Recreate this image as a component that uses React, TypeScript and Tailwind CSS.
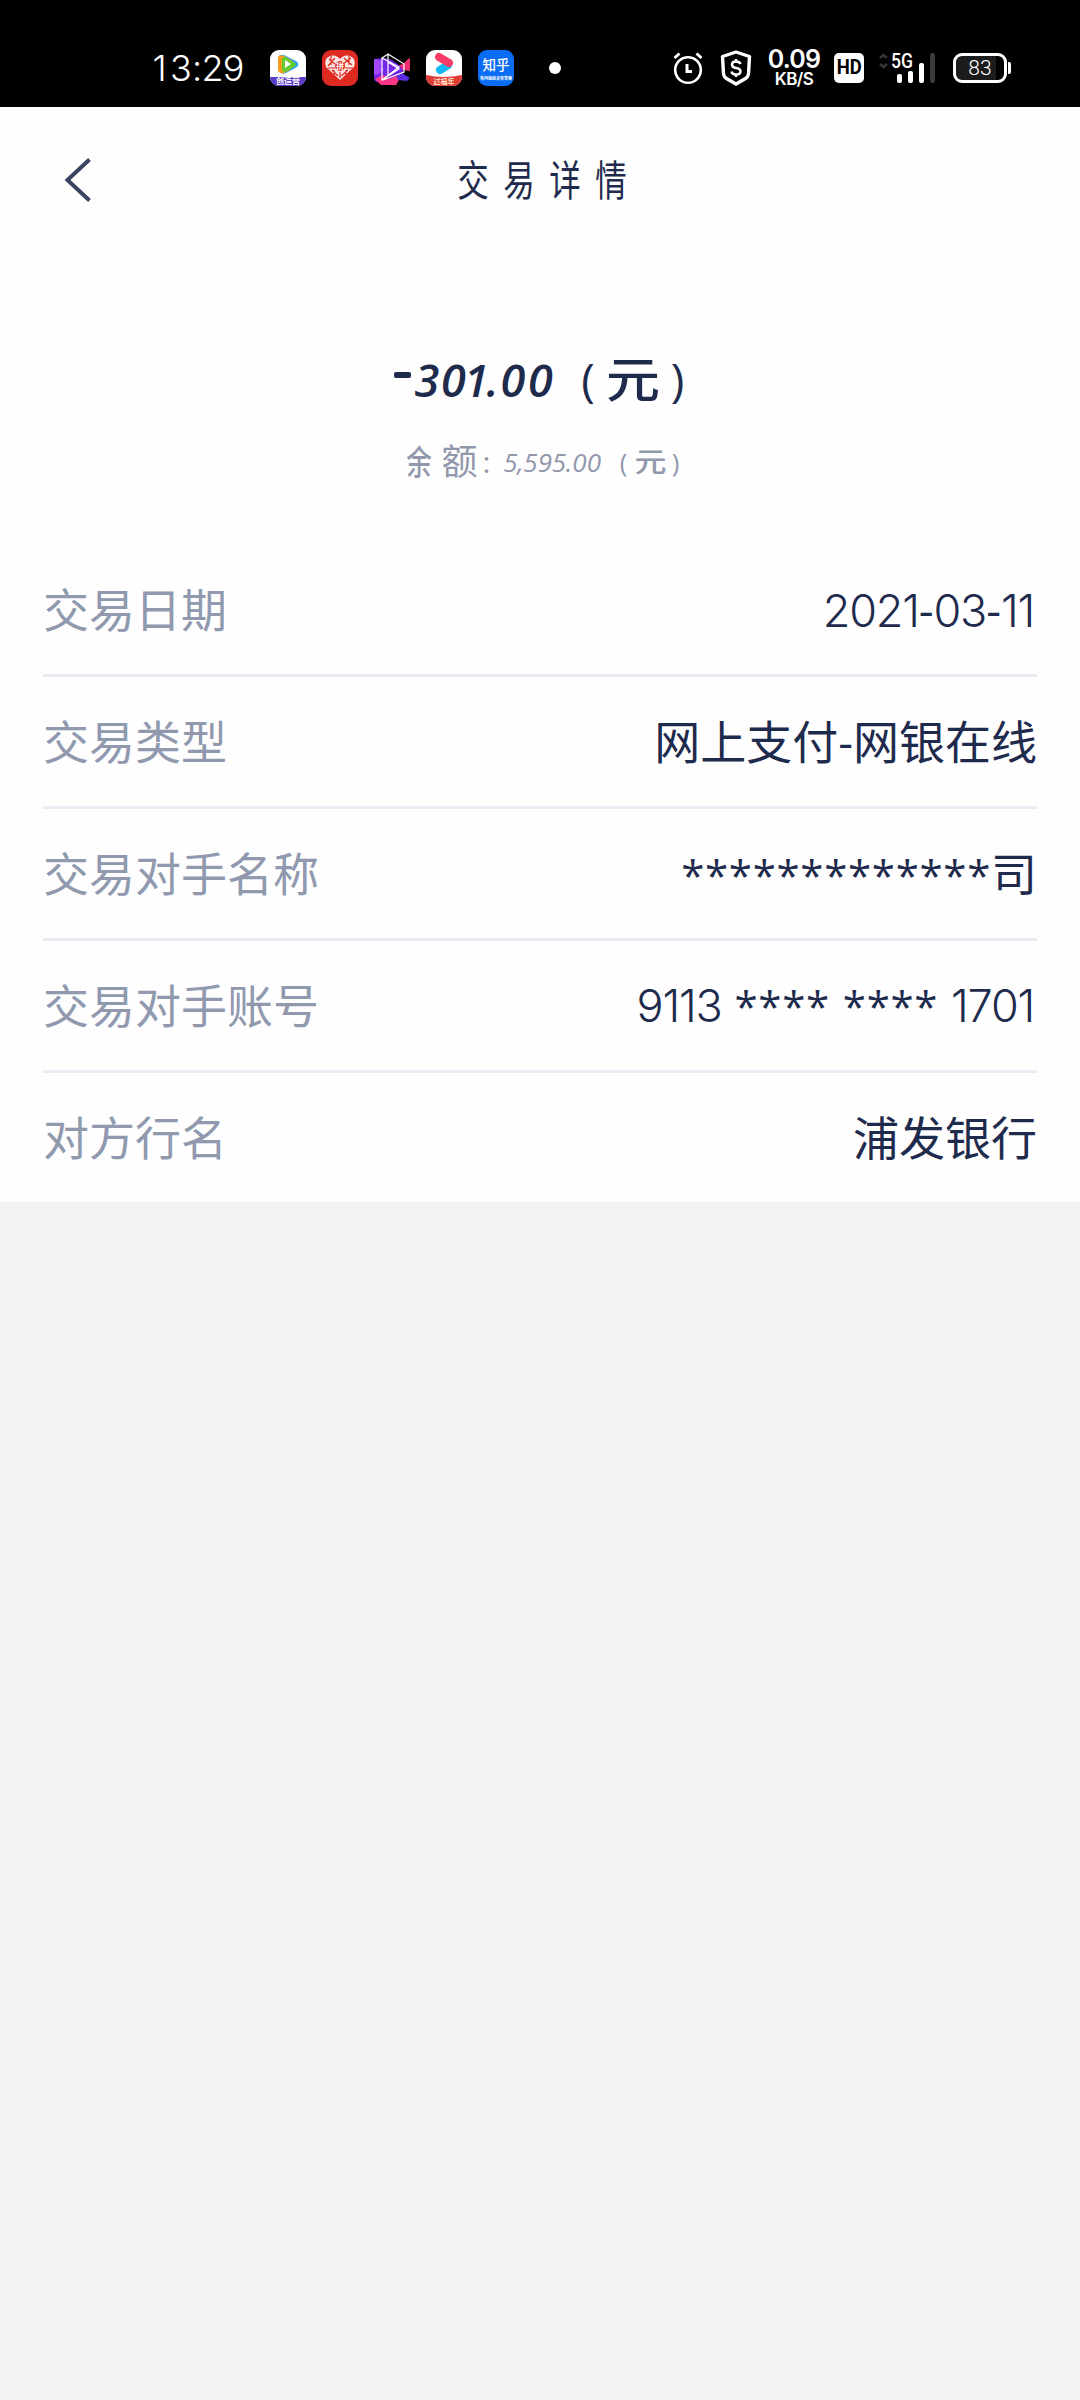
import type { ReactNode } from 'react';

type Glyph = [char: string, width: number];

const rows = [
  { label: '交易日期', value: '2021-03-11' },
  { label: '交易类型', value: '网上支付-网银在线' },
  { label: '交易对手名称', value: '*************司' },
  { label: '交易对手账号', value: '9113 **** **** 1701' },
  { label: '对方行名', value: '浦发银行' },
];

const amount: Glyph[] = [['3', 26], ['0', 27], ['1', 19], ['.', 13], ['0', 28], ['0', 27]];
const balance: Glyph[] = [['5', 14], [',', 6], ['5', 14], ['9', 15], ['5', 13], ['.', 7], ['0', 14], ['0', 15]];

// Each character sits centered in its own slot
function Spaced({ glyphs }: { glyphs: Glyph[] }) {
  return (
    <>
      {glyphs.map(([char, width], i) => (
        <span key={i} className="flex justify-center" style={{ width }}>{char}</span>
      ))}
    </>
  );
}

// Digits use Inter for its narrow proportional ones, everything else keeps the body font
function Value({ text }: { text: string }) {
  return (
    <span className="flex items-baseline whitespace-pre">
      {text.match(/[\d ]+|\*+|[^\d* ]+/g)?.map((part, i) => {
        if (/[\d ]/.test(part)) {
          return (
            <span key={i} className="font-[Inter] text-[45px] font-light tracking-[-1.2px] [word-spacing:1.5px] last:pr-[3px]">
              {part}
            </span>
          );
        }
        if (part[0] === '*') return <span key={i} className="text-[42px] tracking-[0.7px]">{part}</span>;
        return <span key={i}>{part}</span>;
      })}
    </span>
  );
}

function AppIcon({ children }: { children: ReactNode }) {
  return (
    <svg viewBox="0 0 36 36" className="size-9 rounded-[9px]">
      {children}
    </svg>
  );
}

function StatusBar() {
  return (
    <div className="flex h-[107px] items-center bg-black pt-[29px] pl-[150px] text-white">
      <div className="flex w-[120px] font-[Inter] text-[36px] leading-none font-[350]">
        <Spaced glyphs={[['1', 19], ['3', 24], [':', 8], ['2', 23], ['9', 19]]} />
      </div>

      <div className="flex gap-4">
        <AppIcon>
          <rect width="36" height="36" fill="#fff" />
          <path d="M9 6q1-2 5-1l12 6q4 3 1 6l-11 6q-5 2-7-2z" fill="#2ba4f0" />
          <path d="M8 7q2-3 6-1l9 5-3 9-6 3q-5 1-6-3z" fill="#ff9b1c" />
          <path d="M12 8q2-2 5 0l8 5q2 2-1 4l-9 5q-3 0-3-3z" fill="#64cf2c" />
          <path d="M15 10l6 4-6 4z" fill="#fff" />
          <rect y="27" width="36" height="9" fill="#593bc7" />
          <text x="18" y="34" textAnchor="middle" fontSize="8" fontWeight="700" fill="#fff">创造营</text>
        </AppIcon>
        <AppIcon>
          <rect width="36" height="36" fill="#df2a22" />
          <path d="M18 30L4 17q-3-8 4-11 6-2 10 3 4-5 10-3 7 3 4 11z" fill="#fbe3e0" />
          <path d="M7 9l6 5M13 8l-7 8M22 8l8 7M29 8l-8 6M6 18h7M23 18h8M10 20l6 6M26 20l-7 6M12 20v5M24 20v5M18 22v6M9 6v9M27 6v9" stroke="#df2a22" strokeWidth="1.2" fill="none" />
          <circle cx="18" cy="16" r="5" fill="#df2a22" />
          <text x="18" y="19" textAnchor="middle" fontSize="8" fontWeight="700" fill="#fff">拼</text>
        </AppIcon>
        <AppIcon>
          <path d="M0 9l10-1 8 2 12 9-4 9-4 2-8 3H7L0 31z" fill="#7426e8" />
          <path d="M0 9l9 2-3 5 4 4-5 4-5 1z" fill="#a348ff" />
          <path d="M25 15l4-1 6-6 1 1v12l-7-1z" fill="#f02c70" />
          <path d="M1 29l8-4 6 4 7-3 3 4-3 5H7z" fill="#ff3686" />
          <path d="M21 22l7 1 8 5-3 3-9-1z" fill="#5a2be0" />
          <path d="M8 8l6-4v22l-6 4zM8 8l17 9-17 13M14 4l16 10v8L9 30M14 12l11 7-11 7" fill="none" stroke="#fff" strokeWidth="1.2" />
        </AppIcon>
        <AppIcon>
          <rect width="36" height="36" fill="#fff" />
          <path d="M14 20l8-5" stroke="#12b7f5" strokeWidth="8" strokeLinecap="round" />
          <path d="M13 7l10 6" stroke="#fa3b67" strokeWidth="8" strokeLinecap="round" />
          <path d="M0 25q18 4 36 0v11H0z" fill="#df3a35" />
          <text x="18" y="34" textAnchor="middle" fontSize="7" fontWeight="700" fill="#ffe3c4">过福年</text>
        </AppIcon>
        <AppIcon>
          <rect width="36" height="36" fill="#0b6cf4" />
          <text x="18" y="20" textAnchor="middle" fontSize="13.5" fontWeight="500" fill="#fff">知乎</text>
          <text x="18" y="30" textAnchor="middle" fontSize="4" fontWeight="700" fill="#fff">有问题就会有答案</text>
        </AppIcon>
      </div>

      <div className="ml-[35px] size-3 rounded-full bg-white" />

      {/* Alarm */}
      <svg viewBox="0 0 30 34" className="ml-[112px] h-[34px] w-[30px]" fill="none" stroke="#fff" strokeWidth="2.6">
        <circle cx="15" cy="19" r="12.8" />
        <path d="M1.5 7l5-4.5M28.5 7l-5-4.5M14 13v7.5h5" strokeWidth="3" />
      </svg>

      {/* Shield */}
      <svg viewBox="0 0 32 36" className="ml-[17px] h-9 w-8" fill="none" stroke="#fff" strokeWidth="3.4" strokeLinejoin="round">
        <path d="M16 2L2.5 6.5 3.5 24q.5 3 3 4.5L16 34l9.5-5.500q2.500-1.500 3-4.500l1-17.500z" />
        <path d="M20.5 14q-1-2.500-4.500-2.500-4 0-4 3t4 3.500q4.500.5 4.500 3.500T16 24.500q-4 0-4.500-3M16 9v3M16 24v3" strokeWidth="2.5" />
      </svg>

      <div className="ml-[14px] flex w-[56px] flex-col items-center font-[Inter] font-semibold">
        <span className="text-[25px] leading-[20px] tracking-[-0.8px]">0.09</span>
        <span className="mt-[3px] text-[17px] leading-[15px] tracking-[-0.6px]">KB/S</span>
      </div>

      <div className="ml-[12px] flex h-[30px] w-[30px] items-center justify-center rounded-[5px] bg-white font-[Roboto] text-[21px] font-bold text-black">
        <span className="scale-x-[0.88]">HD</span>
      </div>

      {/* Signal */}
      <svg viewBox="0 0 58 32" className="ml-[14px] h-8 w-[58px]">
        <path d="M2 6l3.5-3L9 6M2 12l3.5 3L9 12" fill="none" stroke="#333" strokeWidth="2.8" />
        <text x="13" y="15.5" fontFamily="Roboto" fontSize="20" fontWeight="500" fill="#fff" textLength="22" lengthAdjust="spacingAndGlyphs">5G</text>
        <rect x="19" y="22" width="5" height="9" rx="2" fill="#fff" />
        <rect x="30" y="19" width="5" height="12" rx="2" fill="#fff" />
        <rect x="41" y="11" width="5" height="20" rx="2" fill="#fff" />
        <rect x="52" y="1" width="5" height="30" rx="2" fill="#3b3b3b" />
      </svg>

      {/* Battery */}
      <div className="ml-[17px] flex items-center gap-[1px]">
        <div className="flex h-[30px] w-[54px] items-center justify-center rounded-[9px] border-3 border-white bg-[linear-gradient(90deg,#1c1c1c_84%,#000_84%)] font-[Roboto] text-[21px] leading-none font-light">
          83
        </div>
        <div className="h-3 w-[3px] rounded-r-xs bg-white" />
      </div>
    </div>
  );
}

export default function App() {
  return (
    <div className="min-h-[2400px] w-[1080px] bg-[#f3f3f3] font-['Open_Sans','Noto_Sans_CJK_SC',sans-serif] text-[#1f2b4d]">
      <StatusBar />

      <main className="bg-[#fefefe]">
        {/* Header */}
        <header className="flex h-[145px] items-center pl-[60px]">
          <svg viewBox="0 0 32 46" className="h-[46px] w-8" fill="none" stroke="#3a4562" strokeWidth="4">
            <path d="M29.5 2.5L7.5 23l22 20.500" />
          </svg>
          <h1 className="ml-[358px] flex text-[42px]">
            {'交易详情'.split('').map((char) => (
              <span key={char} className="flex w-[46px] justify-center">
                <span className="scale-x-[0.75]">{char}</span>
              </span>
            ))}
          </h1>
        </header>

        {/* Amount */}
        <section className="flex h-[293px] flex-col items-center pt-[92px] pl-[5px]">
          <div className="flex h-[70px] items-center text-[46px] leading-none font-semibold">
            <span className="mr-[3px] mb-[8px] h-[6px] w-[17px] rounded-xs bg-[#1f2b4d]" />
            <span className="flex text-[45px] italic"><Spaced glyphs={amount} /></span>
            <span className="ml-[20px] flex items-center font-medium">
              <Spaced glyphs={[['(', 28]]} />
              <span className="flex w-[62px] justify-center text-[54px]"><span className="scale-y-[0.88]">元</span></span>
              <Spaced glyphs={[[')', 27]]} />
            </span>
          </div>
          <div className="mt-[28px] flex h-[40px] items-center text-[26px] leading-none font-medium text-[#9298ac]">
            <span className="flex w-[35px] justify-center text-[34px]"><span className="scale-x-[0.75]">余</span></span>
            <span className="flex w-[46px] justify-center text-[36px] font-normal">额</span>
            <span className="flex w-[8px] justify-center text-[30px]">:</span>
            <span className="ml-[13px] flex italic"><Spaced glyphs={balance} /></span>
            <span className="ml-[12px] flex items-center">
              <Spaced glyphs={[['(', 20]]} />
              <span className="flex w-[34px] justify-center text-[32px]"><span className="scale-y-[0.85]">元</span></span>
              <Spaced glyphs={[[')', 16]]} />
            </span>
          </div>
        </section>

        {/* Details */}
        <dl className="px-[43px]">
          {rows.map((row) => (
            <div
              key={row.label}
              className="flex h-[132px] items-center justify-between border-b-3 border-[#e8edf4] pb-[1px] text-[46px] leading-none last:h-[129px] last:border-b-0"
            >
              <dt className="text-[#9099ae]">{row.label}</dt>
              <dd><Value text={row.value} /></dd>
            </div>
          ))}
        </dl>
      </main>
    </div>
  );
}
